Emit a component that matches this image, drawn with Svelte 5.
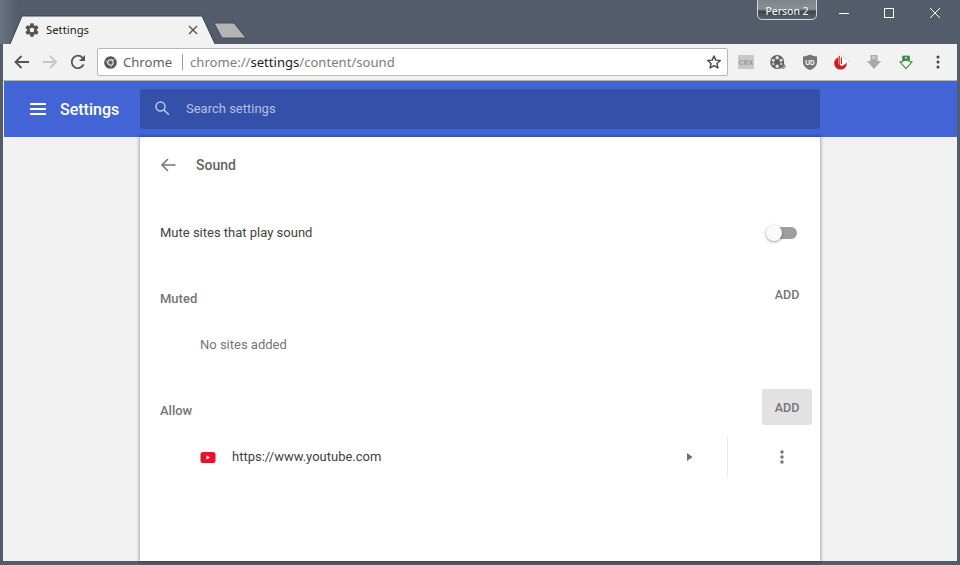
<script>
	let muted = $state(false);
</script>

<div class="window">
	<div class="tabstrip">
		<svg class="tab-shape" width="210" height="30" viewBox="0 0 210 30">
			<path d="M0 29 L12 1 H192 L205 29" fill="#f2f2f2" stroke="#3c4450" stroke-width="1" />
		</svg>
		<div class="tab">
			<svg class="tab-gear" width="16" height="16" viewBox="0 0 24 24">
				<path fill="#545454" d="M19.4 13c.04-.3.1-.65.1-1s-.06-.7-.1-1l2.1-1.65c.2-.15.25-.42.13-.64l-2-3.46c-.12-.22-.4-.3-.6-.22l-2.5 1c-.52-.4-1.08-.73-1.7-.98l-.37-2.65A.5.5 0 0 0 14 2h-4a.5.5 0 0 0-.5.42l-.37 2.65c-.62.25-1.18.58-1.7.98l-2.5-1c-.22-.08-.48 0-.6.22l-2 3.46c-.13.22-.07.49.12.64L4.57 11c-.04.32-.07.66-.07 1s.03.68.07 1l-2.11 1.65c-.19.15-.25.42-.12.64l2 3.46c.12.22.38.3.6.22l2.49-1c.52.4 1.08.73 1.7.98l.37 2.65c.03.24.25.42.5.42h4c.25 0 .46-.18.5-.42l.37-2.65c.62-.25 1.18-.58 1.7-.98l2.49 1c.22.08.48 0 .6-.22l2-3.46c.13-.22.07-.49-.12-.64L19.4 13zM12 15.5a3.5 3.5 0 1 1 0-7 3.5 3.5 0 0 1 0 7z" />
			</svg>
			<span class="tab-title">Settings</span>
			<svg class="tab-close" width="10" height="10" viewBox="0 0 10 10">
				<path d="M1 1 L9 9 M9 1 L1 9" stroke="#555" stroke-width="1.4" />
			</svg>
		</div>
		<svg class="new-tab" width="34" height="17" viewBox="0 0 34 17">
			<path d="M1 1 H21 L33 16 H9 Z" fill="#b4b4b4" stroke="#444c58" stroke-width="1" />
		</svg>

		<div class="person">Person 2</div>
		<div class="win-controls">
			<svg width="46" height="28" viewBox="0 0 46 28"><path d="M20 13.5 H30" stroke="#fff" stroke-width="1" /></svg>
			<svg width="46" height="28" viewBox="0 0 46 28"><rect x="19.5" y="8.5" width="9" height="9" fill="none" stroke="#fff" stroke-width="1" /></svg>
			<svg width="46" height="28" viewBox="0 0 46 28"><path d="M19 8 L29 18 M29 8 L19 18" stroke="#fff" stroke-width="1" /></svg>
		</div>
	</div>

	<div class="toolbar">
		<button class="nav" aria-label="Back">
			<svg width="18" height="18" viewBox="0 0 18 18"><path d="M16 9 H3 M8.5 3 L2.5 9 L8.5 15" fill="none" stroke="#555" stroke-width="1.9" /></svg>
		</button>
		<button class="nav" aria-label="Forward">
			<svg width="18" height="18" viewBox="0 0 18 18"><path d="M2 9 H15 M9 3 L15 9 L9 15" fill="none" stroke="#c6c6c6" stroke-width="1.9" /></svg>
		</button>
		<button class="nav" aria-label="Reload">
			<svg width="18" height="18" viewBox="0 0 18 18">
				<path d="M14.6 11.5 A6.2 6.2 0 1 1 13.6 4.8" fill="none" stroke="#555" stroke-width="1.8" />
				<path d="M16 2 V8 H10 Z" fill="#555" />
			</svg>
		</button>
		<div class="omnibox">
			<svg class="chrome-icon" width="13" height="13" viewBox="0 0 14 14">
				<circle cx="7" cy="7" r="6.8" fill="#555" />
				<circle cx="7" cy="7" r="3.4" fill="#fff" />
				<circle cx="7" cy="7" r="2.4" fill="#666" />
				<path d="M7 3.6 H13 M4.2 8.6 L1.4 3.6 M9.8 8.6 L6.8 13.4" stroke="#ddd" stroke-width=".6" />
			</svg>
			<span class="chip">Chrome</span>
			<span class="chip-sep"></span>
			<span class="url">chrome://<b>settings</b>/content/sound</span>
			<svg class="star" width="16" height="16" viewBox="0 0 24 24">
				<path d="M12 3 L14.7 9.2 L21.5 9.8 L16.4 14.3 L17.9 21 L12 17.5 L6.1 21 L7.6 14.3 L2.5 9.8 L9.3 9.2 Z" fill="none" stroke="#444" stroke-width="2.1" stroke-linejoin="round" />
			</svg>
		</div>
		<div class="extensions">
			<div class="ext">
				<svg width="16" height="14" viewBox="0 0 16 14">
					<rect width="16" height="14" fill="#c8c8c8" />
					<text x="8" y="10" text-anchor="middle" class="crx">CRX</text>
				</svg>
			</div>
			<div class="ext">
				<svg width="16" height="16" viewBox="0 0 16 16">
					<path d="M11 6 L16 12 L14 15 L9 14 Z" fill="#8b97ad" />
					<circle cx="7.2" cy="8" r="7" fill="#5c5c5c" />
					<circle cx="7.2" cy="3.8" r="1.8" fill="#e4e4e4" />
					<circle cx="7.2" cy="12.2" r="1.8" fill="#e4e4e4" />
					<circle cx="3.3" cy="6.2" r="1.7" fill="#d0d0d0" />
					<circle cx="11.1" cy="6.2" r="1.7" fill="#d0d0d0" />
					<circle cx="3.3" cy="10" r="1.4" fill="#bbb" />
					<circle cx="11.1" cy="10" r="1.4" fill="#bbb" />
				</svg>
			</div>
			<div class="ext">
				<svg width="14" height="16" viewBox="0 0 14 16">
					<path d="M7 .5 C9 1.6 11.2 2.2 14 2.4 V8 C14 11.8 11 14.6 7 16 C3 14.6 0 11.8 0 8 V2.4 C2.8 2.2 5 1.6 7 .5 Z" fill="#757575" />
					<text x="7" y="10.5" text-anchor="middle" class="ublock">UD</text>
				</svg>
			</div>
			<div class="ext">
				<svg width="16" height="16" viewBox="0 0 16 16">
					<circle cx="6.5" cy="9.2" r="6.3" fill="#d3191c" />
					<path d="M4.5 .5 L15.5 7 L8 12 L4.5 10 Z" fill="#fff" stroke="#d0d0d0" stroke-width=".6" />
					<path d="M5.2 2 V12 M7.4 3.5 V10" stroke="#d3191c" stroke-width="1.1" />
				</svg>
			</div>
			<div class="ext">
				<svg width="16" height="18" viewBox="0 0 18 18">
					<path d="M5 1 H13 V8 H17 L9 17 L1 8 H5 Z" fill="#a8a8a8" />
					<path d="M6.5 2 H11.5 V6 H6.5 Z" fill="#c8c8c8" />
				</svg>
			</div>
			<div class="ext">
				<svg width="14" height="15" viewBox="0 0 18 18">
					<path d="M5 1 H13 V8 H17 L9 17 L1 8 H5 Z" fill="#fff" stroke="#3f8a46" stroke-width="1.4" stroke-linejoin="round" />
					<path d="M4.4 .4 H13.6 V7 H4.4 Z" fill="#3f8a46" />
					<rect x="8" y="2" width="2" height="2" fill="#fff" />
				</svg>
			</div>
			<div class="ext">
				<svg width="4" height="14" viewBox="0 0 4 14">
					<circle cx="2" cy="2" r="1.5" fill="#444" />
					<circle cx="2" cy="7" r="1.5" fill="#444" />
					<circle cx="2" cy="12" r="1.5" fill="#444" />
				</svg>
			</div>
		</div>
	</div>

	<header class="app-bar">
		<div class="app-title">
			<svg width="16" height="12" viewBox="0 0 16 12"><path d="M0 1 H16 M0 6 H16 M0 11 H16" stroke="#fff" stroke-width="2" /></svg>
			<span>Settings</span>
		</div>
		<div class="search">
			<svg width="18" height="18" viewBox="0 0 24 24">
				<circle cx="10" cy="10" r="6" fill="none" stroke="#bcc7e8" stroke-width="2" />
				<path d="M14.5 14.5 L21 21" stroke="#bcc7e8" stroke-width="2" />
			</svg>
			<span>Search settings</span>
		</div>
	</header>

	<main class="page">
		<section class="card">
			<div class="subpage-head">
				<svg width="16" height="14" viewBox="0 0 16 14"><path d="M15.5 7 H2 M8 1 L2 7 L8 13" fill="none" stroke="#757575" stroke-width="1.5" /></svg>
				<h2>Sound</h2>
			</div>

			<div class="toggle-row">
				<span>Mute sites that play sound</span>
				<button class="toggle" class:on={muted} aria-label="Mute sites" onclick={() => (muted = !muted)}>
					<span class="knob"></span>
				</button>
			</div>

			<div class="section-head muted-head">
				<h3>Muted</h3>
				<button class="add">ADD</button>
			</div>
			<div class="empty">No sites added</div>

			<div class="section-head allow-head">
				<h3>Allow</h3>
				<button class="add hovered">ADD</button>
			</div>
			<div class="site-row">
				<svg class="yt" width="16" height="11" viewBox="0 0 16 11">
					<rect width="15" height="11" x=".5" rx="2.6" fill="#e0162b" />
					<path d="M6.5 3.5 L10 5.5 L6.5 7.5 Z" fill="#fff" />
				</svg>
				<span class="site-url">https://www.youtube.com</span>
				<svg class="caret" width="6" height="8" viewBox="0 0 6 8"><path d="M0 0 L5.5 4 L0 8 Z" fill="#6e6e6e" /></svg>
				<span class="site-sep"></span>
				<svg class="more" width="4" height="14" viewBox="0 0 4 14">
					<circle cx="2" cy="2" r="1.7" fill="#757575" />
					<circle cx="2" cy="7" r="1.7" fill="#757575" />
					<circle cx="2" cy="12" r="1.7" fill="#757575" />
				</svg>
			</div>
		</section>
	</main>
</div>

<style>
	:global(body) {
		background: #525c6b;
	}

	button {
		border: none;
		background: none;
		padding: 0;
		font: inherit;
	}

	.window {
		display: flex;
		flex-direction: column;
		box-sizing: border-box;
		width: 960px;
		height: 565px;
		padding: 0 3px 4px;
		background: linear-gradient(90deg, #6a7380, #525c6b 18px) no-repeat 0 0 / 20px 44px, #525c6b;
		overflow: hidden;
	}

	/* title bar */
	.tabstrip {
		position: relative;
		flex: none;
		height: 44px;
	}

	.tab-shape {
		position: absolute;
		left: 7px;
		top: 15px;
	}

	.tab {
		position: absolute;
		left: 21px;
		top: 16px;
		display: flex;
		align-items: center;
		width: 174px;
		height: 28px;
	}

	.tab-gear {
		margin-right: 6px;
	}

	.tab-title {
		flex: 1;
		padding-bottom: 2px;
		font: 11.3px "Noto Sans", sans-serif;
		color: #222;
	}

	.new-tab {
		position: absolute;
		left: 210px;
		top: 22px;
	}

	.person {
		position: absolute;
		left: 754px;
		top: -2px;
		box-sizing: border-box;
		width: 60px;
		height: 22px;
		padding-top: 4px;
		border: 1px solid #d0d4da;
		border-radius: 0 0 5px 5px;
		background: linear-gradient(#7d8289 0, #8b8f96 50%, #3e4550 62%, #59616d 100%);
		font: 10.5px/16px "Noto Sans", sans-serif;
		text-align: center;
		color: #fff;
	}

	.win-controls {
		position: absolute;
		right: 0;
		top: 0;
		display: flex;
	}

	/* toolbar */
	.toolbar {
		display: flex;
		align-items: center;
		flex: none;
		box-sizing: border-box;
		height: 37px;
		padding-left: 5px;
		background: #f2f2f2;
		border-bottom: 1px solid #b4b4b4;
	}

	.nav {
		display: flex;
		align-items: center;
		justify-content: center;
		width: 28px;
		height: 28px;
	}

	.omnibox {
		display: flex;
		align-items: center;
		box-sizing: border-box;
		width: 631px;
		height: 28px;
		margin-left: 5px;
		padding: 0 5px 0 6px;
		background: #fff;
		border: 1px solid #b8b8b8;
		border-radius: 2px;
		font: 13.1px "Noto Sans", sans-serif;
	}

	.chip {
		margin-left: 6px;
		color: #5f5f5f;
	}

	.chip-sep {
		width: 1px;
		height: 16px;
		margin: 0 7px 0 10px;
		background: #9a9a9a;
	}

	.url {
		flex: 1;
		color: #7d7d7d;
	}

	.url b {
		font-weight: 400;
		color: #222;
	}

	.extensions {
		display: flex;
		margin-left: 2px;
	}

	.ext {
		display: flex;
		align-items: center;
		justify-content: center;
		width: 32px;
		height: 28px;
	}

	.crx {
		font: bold 8px "Liberation Mono", monospace;
		fill: #9c9c9c;
	}

	.ublock {
		font: bold 6.5px "Liberation Sans", sans-serif;
		fill: #fff;
	}

	/* settings app bar */
	.app-bar {
		display: flex;
		align-items: center;
		flex: none;
		height: 56px;
		background: #4364d4;
		border-left: 1px solid #f2f2f2;
		font-family: Roboto, sans-serif;
	}

	.app-title {
		display: flex;
		align-items: center;
		gap: 14px;
		width: 136px;
		padding-left: 26px;
		box-sizing: border-box;
		font-size: 16px;
		font-weight: 500;
		color: #fff;
	}

	.search {
		display: flex;
		align-items: center;
		gap: 15px;
		box-sizing: border-box;
		width: 680px;
		height: 40px;
		padding: 0 0 2px 13px;
		background: #3450a8;
		border-radius: 2px;
		font-size: 13px;
		color: #b4c0e4;
	}

	/* page */
	.page {
		flex: 1;
		min-height: 0;
		padding-left: 137px;
		background: #f1f1f1;
		font-family: Roboto, sans-serif;
		font-size: 13px;
	}

	.card {
		box-sizing: border-box;
		width: 680px;
		height: 100%;
		background: #fff;
		box-shadow: 0 0 3px 1px rgba(0, 0, 0, 0.3);
		color: #424242;
	}

	.subpage-head {
		display: flex;
		align-items: center;
		height: 56px;
		padding-left: 20px;
	}

	.subpage-head h2 {
		margin: 0 0 0 20px;
		font-size: 14px;
		font-weight: 500;
		color: #646464;
	}

	.toggle-row {
		display: flex;
		align-items: center;
		justify-content: space-between;
		height: 48px;
		margin-top: 15px;
		padding: 0 23px 0 20px;
	}

	.toggle {
		position: relative;
		width: 24px;
		height: 12px;
		margin-top: 2px;
		border-radius: 6px;
		background: #9e9e9e;
	}

	.knob {
		position: absolute;
		left: -7px;
		top: -2px;
		width: 16px;
		height: 16px;
		border-radius: 50%;
		background: #fafafa;
		box-shadow: 0 1px 3px rgba(0, 0, 0, 0.4);
	}

	.toggle.on .knob {
		left: 15px;
	}

	.section-head {
		display: flex;
		justify-content: space-between;
		padding: 0 8px 0 20px;
	}

	.muted-head {
		margin-top: 20px;
	}

	.allow-head {
		margin-top: 21px;
	}

	.section-head h3 {
		margin: 0;
		padding-top: 15px;
		font-size: 13px;
		font-weight: 500;
		line-height: 15px;
		color: #757575;
	}

	.allow-head h3 {
		padding-top: 14px;
	}

	.add {
		width: 50px;
		height: 36px;
		border-radius: 2px;
		font-size: 12.5px;
		font-weight: 500;
		color: #757575;
	}

	.add.hovered {
		background: #e2e2e2;
	}

	.empty {
		margin-top: 8px;
		padding: 1px 0 0 60px;
		height: 48px;
		box-sizing: border-box;
		line-height: 48px;
		color: #757575;
	}

	.site-row {
		display: flex;
		align-items: center;
		height: 40px;
		margin-top: 12px;
		padding-left: 60px;
	}

	.yt {
		margin-right: 16px;
	}

	.site-url {
		width: 455px;
		padding-bottom: 1px;
	}

	.site-sep {
		width: 1px;
		height: 40px;
		margin-left: 34px;
		background: #e8e8e8;
	}

	.more {
		margin-left: 52px;
	}
</style>
